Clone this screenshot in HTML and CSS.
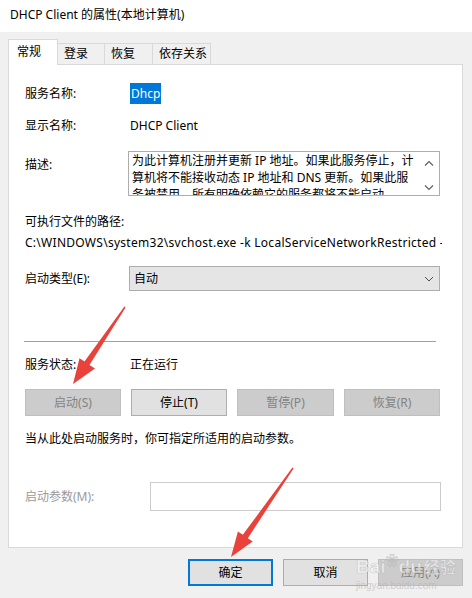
FILE: index.html
```html
<!DOCTYPE html>
<html>
<head>
<meta charset="utf-8">
<link rel="stylesheet" href="styles.css">
</head>
<body>
<div class="window">
  <div class="titlebar">DHCP Client 的属性(本地计算机)</div>
  <div class="client">
    <div class="tabs">
      <div class="tab active">常规</div>
      <div class="tab t-login">登录</div>
      <div class="tab t-rec">恢复</div>
      <div class="tab t-dep">依存关系</div>
    </div>
    <div class="panel">
      <div class="row r-name"><span class="label">服务名称:</span><span class="value"><span class="hl">Dhcp</span></span></div>
      <div class="row r-disp"><span class="label">显示名称:</span><span class="value">DHCP Client</span></div>
      <div class="row r-desc">
        <span class="label l-desc">描述:</span>
        <div class="textbox">
          <div class="tb-text">
            <div class="tb-line">为此计算机注册并更新 IP 地址。如果此服务停止，计</div>
            <div class="tb-line">算机将不能接收动态 IP 地址和 DNS 更新。如果此服</div>
            <div class="tb-line">务被禁用，所有明确依赖它的服务都将不能启动。</div>
          </div>
          <div class="tb-scroll">
            <svg width="10" height="7" viewBox="0 0 10 7"><path d="M1 5.5 L5 1.5 L9 5.5" fill="none" stroke="#606060" stroke-width="1.2"/></svg>
            <svg width="10" height="7" viewBox="0 0 10 7"><path d="M1 1.5 L5 5.5 L9 1.5" fill="none" stroke="#606060" stroke-width="1.2"/></svg>
          </div>
        </div>
      </div>
      <div class="plain r-pathlabel">可执行文件的路径:</div>
      <div class="plain r-path">C:\WINDOWS\system32\svchost.exe -k LocalServiceNetworkRestricted -p</div>
      <div class="row r-start">
        <span class="label l-start">启动类型(E):</span>
        <div class="select">
          <span>自动</span>
          <svg width="10" height="6" viewBox="0 0 10 6"><path d="M1 1 L5 5 L9 1" fill="none" stroke="#505050" stroke-width="1"/></svg>
        </div>
      </div>
      <div class="sep"></div>
      <div class="row r-status"><span class="label">服务状态:</span><span class="value">正在运行</span></div>
      <div class="svc-buttons">
        <div class="btn disabled">启动(S)</div>
        <div class="btn">停止(T)</div>
        <div class="btn disabled">暂停(P)</div>
        <div class="btn disabled">恢复(R)</div>
      </div>
      <div class="plain r-note">当从此处启动服务时，你可指定所适用的启动参数。</div>
      <div class="row r-param">
        <span class="label l-param">启动参数(M):</span>
        <div class="param-input"></div>
      </div>
    </div>
    <div class="footer">
      <div class="btn fbtn default">确定</div>
      <div class="btn fbtn">取消</div>
      <div class="btn fbtn disabled">应用(A)</div>
    </div>
  </div>

  <div class="watermark">
    <div class="wm-big">Bai<span class="wm-paw">❀</span>du<span class="wm-cn">经验</span></div>
    <div class="wm-small">jingyan.baidu.com</div>
  </div>

  <svg class="arrows" width="472" height="598" viewBox="0 0 472 598">
    <polygon fill="#e8423b" points="125.6,307.4 89.5,365 95,368.5 73,384 79.5,358.3 84.5,361.6 124.4,306.6"/>
    <polygon fill="#e8423b" points="293.6,468.4 247.8,538.2 252.7,541.6 231,557 237.9,531.4 242.8,534.8 292.4,467.6"/>
  </svg>
</div>
</body>
</html>
```

FILE: styles.css
```css
html, body {
  margin: 0;
  padding: 0;
}
body {
  width: 472px;
  height: 598px;
  background: #f0f0f0;
  font-family: "Noto Sans", "Noto Sans CJK SC", sans-serif;
  font-size: 12px;
  line-height: 16px;
  color: #000;
}
.window {
  position: relative;
  width: 472px;
  height: 598px;
  overflow: hidden;
}
.titlebar {
  height: 32px;
  box-sizing: border-box;
  background: #fff;
  padding: 7px 0 0 10px;
  color: #000;
}
.client {
  padding: 7px 9px 0 8px;
}
.tabs {
  display: flex;
  align-items: flex-end;
  height: 25px;
  position: relative;
  z-index: 2;
}
.tab {
  height: 21px;
  box-sizing: border-box;
  border: 1px solid #d9d9d9;
  border-bottom: none;
  background: #f0f0f0;
  padding: 2px 0 0 6px;
  margin-left: -1px;
}
.tab.active {
  width: 50px;
  height: 26px;
  margin-left: 0;
  margin-bottom: -1px;
  background: #fff;
  padding: 4px 0 0 8px;
}
.t-login { width: 48px; }
.t-rec { width: 49px; }
.t-dep { width: 59px; }
.panel {
  position: relative;
  width: 455px;
  height: 484px;
  box-sizing: border-box;
  border: 1px solid #d9d9d9;
  background: #fff;
  padding: 19px 0 0 16px;
}
.row {
  display: flex;
  align-items: center;
  height: 20px;
}
.label {
  width: 105px;
  flex: none;
}
.hl {
  background: #0078d7;
  color: #fff;
  padding: 2px 1px;
}
.r-disp { margin-top: 12px; }
.r-desc {
  margin-top: 15px;
  height: 45px;
  align-items: flex-start;
}
.l-desc {
  width: 103px;
  padding-top: 6px;
}
.textbox {
  width: 312px;
  height: 45px;
  box-sizing: border-box;
  border: 1px solid #adadad;
  display: flex;
  overflow: hidden;
}
.tb-text {
  flex: 1;
  height: 43px;
  padding: 0 0 0 3px;
  line-height: 17px;
  white-space: nowrap;
  overflow: hidden;
}
.tb-scroll {
  width: 17px;
  flex: none;
  display: flex;
  flex-direction: column;
  justify-content: space-between;
  align-items: center;
  padding: 8px 0 4px;
  box-sizing: border-box;
  margin-right: 2px;
}
.plain { white-space: nowrap; }
.r-pathlabel { margin-top: 18px; }
.r-path {
  margin-top: 5px;
  width: 417px;
  overflow: hidden;
  letter-spacing: 0.28px;
}
.r-start {
  margin-top: 15px;
  height: 25px;
}
.l-start { width: 104px; }
.select {
  width: 311px;
  height: 25px;
  box-sizing: border-box;
  background: #e5e5e5;
  border: 1px solid #adadad;
  display: flex;
  align-items: center;
  justify-content: space-between;
  padding: 0 5px 0 4px;
}
.sep {
  margin: 50px 0 0 -1px;
  width: 412px;
  height: 1px;
  background: #a0a0a0;
}
.r-status { margin-top: 15px; height: 16px; }
.svc-buttons {
  margin-top: 16px;
  display: grid;
  grid-template-columns: 96px 96px 97px 96px;
  column-gap: 10px;
}
.btn {
  height: 27px;
  box-sizing: border-box;
  border: 1px solid #adadad;
  background: #e1e1e1;
  display: flex;
  align-items: center;
  justify-content: center;
}
.btn.disabled {
  background: #cccccc;
  border-color: #bfbfbf;
  color: #838383;
}
.r-note { margin-top: 15px; }
.r-param {
  margin-top: 35px;
  height: 29px;
}
.l-param {
  width: 125px;
  color: #9a9a9a;
}
.param-input {
  width: 291px;
  height: 29px;
  box-sizing: border-box;
  border: 1px solid #cccccc;
}
.footer {
  margin-top: 11px;
  display: flex;
  justify-content: flex-end;
  gap: 10px;
}
.fbtn {
  width: 85px;
}
.fbtn.default {
  border: 1px solid #0078d7;
  box-shadow: inset 0 0 0 1px #0078d7;
}
.arrows {
  position: absolute;
  left: 0;
  top: 0;
  pointer-events: none;
}
.watermark {
  position: absolute;
  left: 356px;
  top: 548px;
  width: 90px;
  color: rgba(255, 255, 255, 0.55);
  -webkit-text-stroke: 0.6px rgba(170, 170, 170, 0.55);
  pointer-events: none;
}
.wm-big {
  font-family: "Liberation Sans", "Noto Sans CJK SC", sans-serif;
  font-size: 19px;
  line-height: 26px;
  font-weight: bold;
  white-space: nowrap;
}
.wm-paw {
  font-size: 13px;
  vertical-align: 8px;
}
.wm-cn {
  font-size: 16px;
  margin-left: 2px;
}
.wm-small {
  font-family: "Liberation Sans", sans-serif;
  font-size: 10px;
  line-height: 10px;
  white-space: nowrap;
  -webkit-text-stroke: 0;
  color: rgba(180, 180, 180, 0.6);
}
```
